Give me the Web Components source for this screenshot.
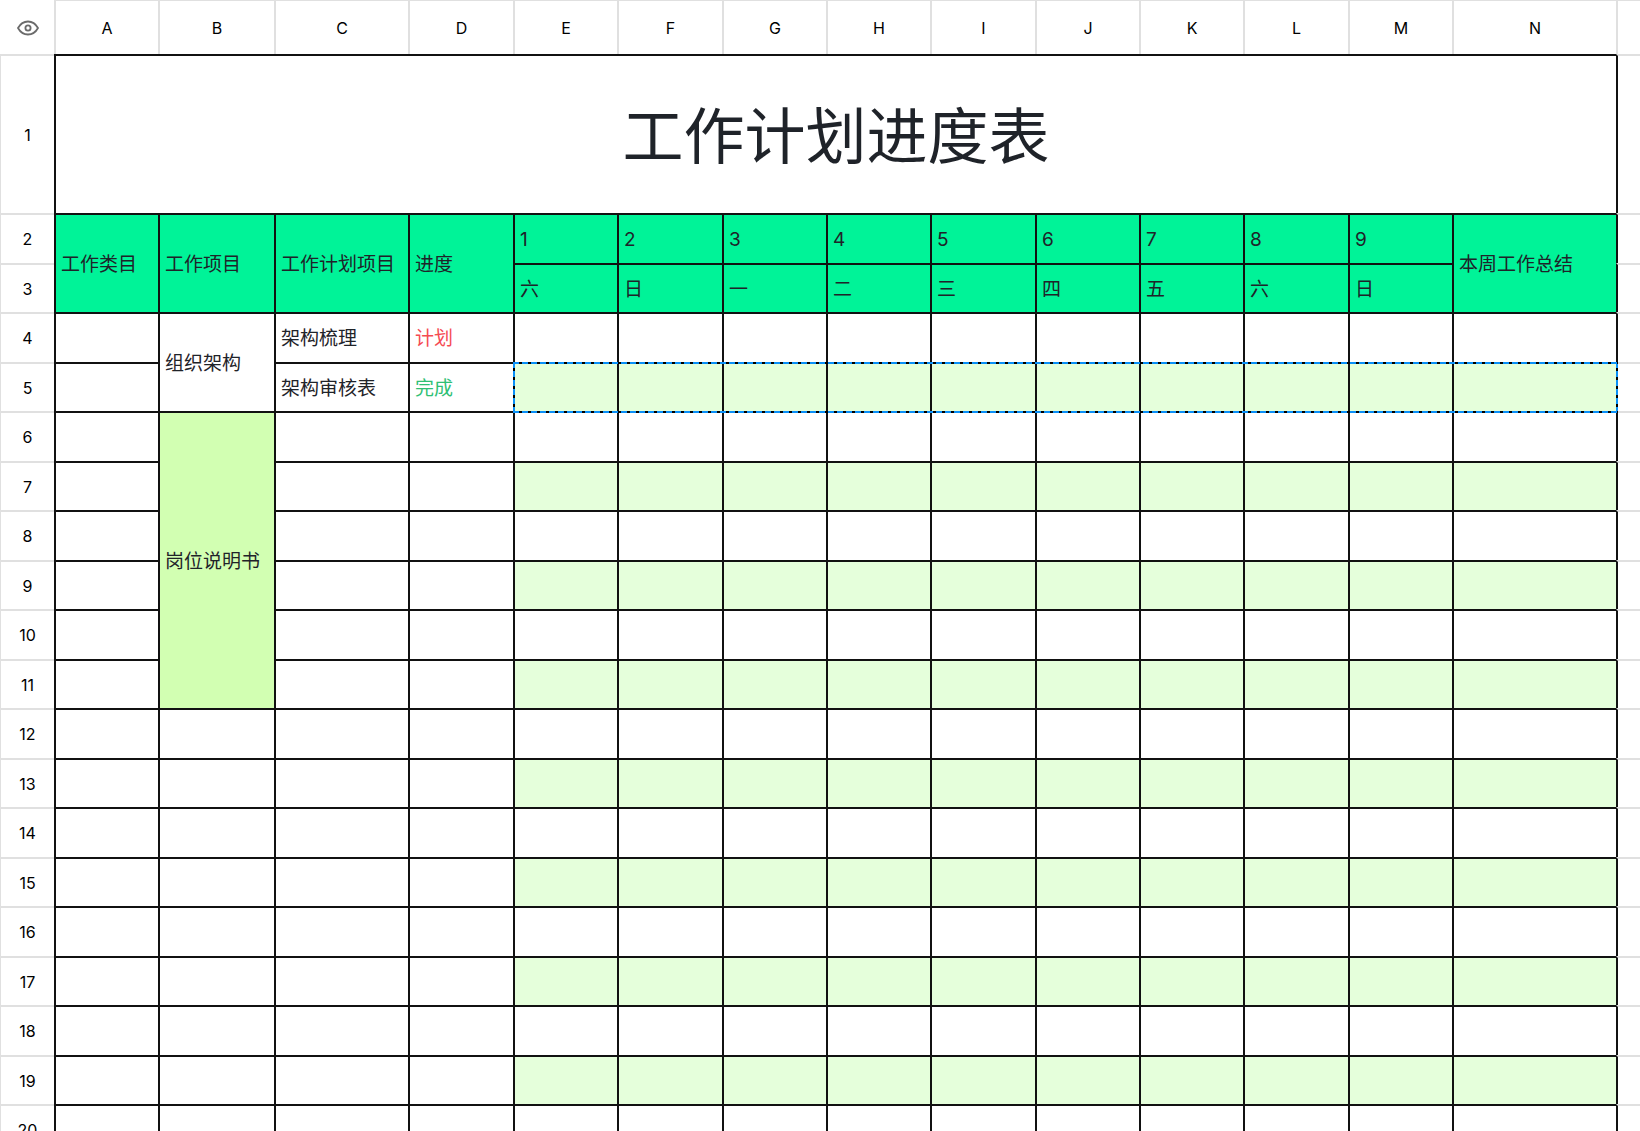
<!DOCTYPE html>
<html lang="zh-CN">
<head>
<meta charset="utf-8">
<title>工作计划进度表</title>
<style>
  html, body { margin: 0; background: #fff; overflow: hidden; }
  body { height: 100vh; font-family: Inter, "Noto Sans CJK SC", sans-serif; color: #1f2329; }
</style>
</head>
<body>
<sheet-grid></sheet-grid>
<script>
class EyeIcon extends HTMLElement {
  constructor() {
    super();
    this.attachShadow({ mode: 'open' }).innerHTML = `
      <style>
        :host { display: block; width: 22px; height: 16px; }
        svg { display: block; width: 100%; height: 100%; }
      </style>
      <svg viewBox="0 0 22 16" fill="none" stroke="#6b6b6b" stroke-width="1.8" aria-hidden="true">
        <path d="M1 8C3.4 3.7 6.8 1.5 11 1.5S18.6 3.7 21 8C18.6 12.3 15.2 14.5 11 14.5S3.4 12.3 1 8Z" stroke-linejoin="round"/>
        <circle cx="11" cy="8" r="2.6"/>
      </svg>`;
  }
}

class SheetSelection extends HTMLElement {
  constructor() {
    super();
    this.attachShadow({ mode: 'open' }).innerHTML = `
      <style>
        :host {
          --h: repeating-linear-gradient(90deg, #0a90f8 0 6px, #000 6px 9px);
          --v: repeating-linear-gradient(180deg, #0a90f8 0 6px, #000 6px 9px);
          display: block;
          pointer-events: none;
          background:
            var(--h) top / 100% 2px no-repeat,
            var(--h) bottom / 100% 2px no-repeat,
            var(--v) left / 2px 100% no-repeat,
            var(--v) right / 2px 100% no-repeat;
        }
      </style>`;
  }
}

class SheetGrid extends HTMLElement {
  constructor() {
    super();
    const letters = [...'ABCDEFGHIJKLMN'];
    const widths = [104, 116, 134, 105, 104, 105, 104, 104, 105, 104, 104, 105, 104, 164];
    const days = ['六', '日', '一', '二', '三', '四', '五', '六', '日'];
    const td = (text = '', cls = '', attrs = '') => `<td class="${cls}" ${attrs}>${text}</td>`;

    const cells = (row) => {
      if (row === 1) return td('工作计划进度表', 'title', 'colspan="14"');
      if (row === 2) {
        return ['工作类目', '工作项目', '工作计划项目', '进度'].map(t => td(t, 'head', 'rowspan="2"')).join('')
          + days.map((_, i) => td(i + 1, 'head')).join('')
          + td('本周工作总结', 'head', 'rowspan="2"');
      }
      if (row === 3) return days.map(d => td(d, 'head')).join('');
      let out = td();
      if (row === 4) out += td('组织架构', '', 'rowspan="2"') + td('架构梳理') + td('计划', 'plan');
      else if (row === 5) out += td('架构审核表') + td('完成', 'done');
      else {
        if (row === 6) out += td('岗位说明书', 'post', 'rowspan="6"');
        if (row > 11) out += td();
        out += td() + td();
      }
      for (let i = 0; i < 10; i++) {
        const mark = row === 5 && i === 0 ? '<sheet-selection></sheet-selection>' : '';
        out += td(mark, (row % 2 ? 'band' : '') + (mark ? ' anchor' : ''));
      }
      return out;
    };

    let rows = '';
    for (let r = 1; r <= 20; r++) {
      rows += `<tr class="${r === 1 ? 'first' : r % 2 ? '' : 'tall'}"><th scope="row">${r}</th>${cells(r)}<td class="rest"></td></tr>`;
    }

    this.attachShadow({ mode: 'open' }).innerHTML = `
      <style>
        :host { --line: #111; --rule: #e0e0e0; display: block; }
        table { width: 100%; table-layout: fixed; border-collapse: separate; border-spacing: 0; }
        .index { width: 54px; }
        th, td { box-sizing: border-box; padding: 0; height: 49px; vertical-align: middle; }
        .tall > * { height: 50px; }
        .first > * { height: 159px; }
        th { font-size: 16px; line-height: 20px; font-weight: 400; color: #000; text-align: center; }
        thead th { height: 54px; border-top: 1px solid var(--rule); border-left: 2px solid var(--rule); }
        thead .corner { border-color: transparent; border-left-width: 1px; }
        eye-icon { margin: 0 auto; }
        tbody th { border-top: 2px solid var(--rule); border-left: 1px solid var(--rule); }
        td {
          padding: 2px 0 0 5px;
          border-top: 2px solid var(--line);
          border-left: 2px solid var(--line);
          font-size: 19px;
          line-height: 28px;
          white-space: nowrap;
        }
        .title { padding: 4px 0 0; text-align: center; font-size: 61px; line-height: 88px; }
        .head { background: #00f398; }
        .plan { color: #f54a52; }
        .done { color: #2fc074; }
        .post { background: #d2ffb2; }
        .band { background: #e5ffdb; }
        .rest { border-top-color: var(--rule); }
        .anchor { position: relative; }
        sheet-selection { position: absolute; z-index: 1; top: -2px; left: -2px; width: 1105px; height: 51px; }
      </style>
      <table>
        <colgroup><col class="index">${widths.map(w => `<col style="width:${w}px">`).join('')}<col></colgroup>
        <thead><tr><th class="corner"><eye-icon></eye-icon></th>${letters.map(l => `<th scope="col">${l}</th>`).join('')}<th></th></tr></thead>
        <tbody>${rows}</tbody>
      </table>`;
  }
}

customElements.define('eye-icon', EyeIcon);
customElements.define('sheet-selection', SheetSelection);
customElements.define('sheet-grid', SheetGrid);
</script>
</body>
</html>
